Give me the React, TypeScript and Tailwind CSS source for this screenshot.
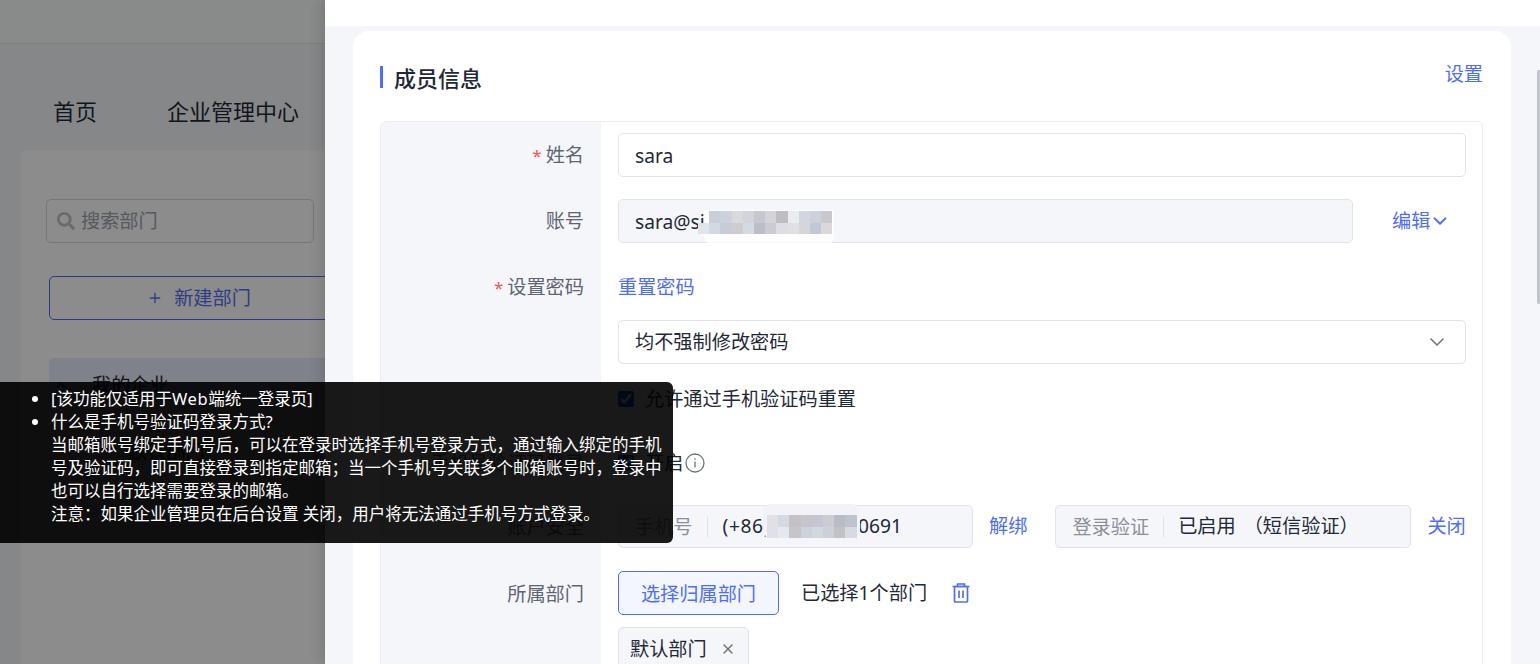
import type { ReactNode } from 'react';
import { ChevronDown, ChevronUp, Plus, X } from 'lucide-react';
import { FaSearch } from 'react-icons/fa';

const FONT = 'font-["Noto_Sans","Noto_Sans_CJK_SC",sans-serif]';

// 打码区域的马赛克色块
const EMAIL_MOSAIC = [
  ['bg-transparent', 'bg-[#c9ced9]', 'bg-[#cdd1dc]', 'bg-[#dadadd]', 'bg-[#d2d4da]', 'bg-[#c5c8d1]', 'bg-[#d3d3d8]', 'bg-[#bfbcc4]', 'bg-[#ebecef]', 'bg-[#d2d6df]', 'bg-[#cdd1db]', 'bg-[#c8c8ce]'],
  ['bg-[#e1e4ea]', 'bg-[#d3d8e2]', 'bg-[#c8ccd6]', 'bg-[#cdcdcf]', 'bg-[#d3dae1]', 'bg-[#bdbdc8]', 'bg-[#cbccd2]', 'bg-[#dddde3]', 'bg-[#e0e0e3]', 'bg-[#d5d5da]', 'bg-[#c2c7d6]', 'bg-[#dbd8da]'],
];

const PHONE_MOSAIC = [
  ['bg-[#e0e1e7]', 'bg-[#d5d9e2]', 'bg-[#c5c2c6]', 'bg-[#c6c5cb]', 'bg-[#c5c6d1]', 'bg-[#ccccd2]', 'bg-[#b9bcc5]', 'bg-[#bcc4ce]'],
  ['bg-[#e0e1e8]', 'bg-[#e4e8f0]', 'bg-[#c6c5c9]', 'bg-[#cdd1db]', 'bg-[#d3d7e0]', 'bg-[#ced0d9]', 'bg-[#c2c1c6]', 'bg-[#d7dae0]'],
];

function Mosaic({ rows, className }: { rows: string[][]; className: string }) {
  return (
    <div className={`absolute flex flex-col ${className}`}>
      {rows.map((row, i) => (
        <div key={i} className="flex">
          {row.map((color, j) => (
            <div key={j} className={`w-[11.2px] h-[11.5px] ${color}`} />
          ))}
        </div>
      ))}
    </div>
  );
}

function Row({
  label,
  required,
  children,
}: {
  label: string;
  required?: boolean;
  children: ReactNode;
}) {
  return (
    <div className="flex">
      <div className="w-[220px] shrink-0 bg-[#f5f6fa] pt-[11px] pr-[17px] text-right text-[#5e6472] leading-[44px]">
        {required && <span className="text-[#f5574c] text-[17px] mr-[4px]">*</span>}
        {label}
      </div>
      <div className="flex-1 min-w-0 py-[11px] pl-[17px] pr-[16px]">{children}</div>
    </div>
  );
}

function DimmedPage() {
  return (
    <div className="w-[325px] shrink-0 h-full bg-[#f5f6fa] overflow-hidden">
      <div className="h-[44px] border-b border-[#e6e6e6] bg-[#fafbfc]" />
      <div className="flex h-[106px] items-center pl-[53px] pt-[28px] gap-[70px] text-[22px] text-[#1f2937] whitespace-nowrap">
        <span>首页</span>
        <span>企业管理中心</span>
      </div>
      <div className="ml-[21px] h-[514px] bg-white rounded-t-[6px] pt-[49px] pl-[25px]">
        <div className="flex items-center w-[268px] h-[44px] border border-[#d9d9d9] rounded-[5px] pl-[10px] gap-[6px] text-[#9ca3af]">
          <FaSearch size={18} className="text-[#c4c4c4]" />
          搜索部门
        </div>
        <div className="flex items-center justify-center gap-[11px] w-[340px] ml-[3px] mt-[33px] h-[44px] border border-[#4c6cf7] rounded-[5px] text-[#5470f5] pr-[40px]">
          <Plus size={16} />
          新建部门
        </div>
        <div className="flex items-center w-[340px] ml-[3px] mt-[38px] h-[44px] bg-[#e8edfb] rounded-t-[5px] pl-[5px] pt-[10px] text-[#1f2937]">
          <ChevronUp size={14} />
          <span className="ml-[24px]">我的企业</span>
        </div>
        <div className="ml-[82px] mt-[36px] text-[#1f2937]">默认部门</div>
      </div>
    </div>
  );
}

function DrawerContent() {
  return (
    <div className="flex-1 min-w-0 h-full bg-white flex flex-col shadow-[-4px_0_12px_rgba(0,0,0,0.12)] relative z-10">
      <div className="h-[26px] shrink-0 bg-white" />
      <div className="flex-1 min-h-0 bg-[#f5f6fa] pt-[5px] pl-[28px] pr-[29px] overflow-hidden relative">
        <div className="absolute right-0 top-[44px] w-[3px] h-[234px] bg-[#c1c4cb] rounded-l-[2px]" />
        <div className="bg-white rounded-t-[16px] h-[700px] pt-[35px] px-[27px] pr-[28px]">
          <div className="flex justify-between h-[55px]">
            <div className="flex items-start">
              <div className="w-[3px] h-[22px] bg-[#4f6ef7]" />
              <span className="ml-[11px] text-[22px] font-medium text-[#1f2937] leading-[24px]">成员信息</span>
            </div>
            <span className="text-[#4f6ef7] leading-[16px]">设置</span>
          </div>

          <div className="border border-[#eceef2] rounded-t-[6px] h-[600px] bg-white overflow-hidden text-[#1f2937]">
            <Row label="姓名" required>
              <div className="h-[44px] border border-[#e1e3ea] rounded-[5px] px-[16px] leading-[44px]">sara</div>
            </Row>

            <Row label="账号">
              <div className="flex">
                <div className="relative w-[735px] h-[44px] border border-[#e1e3ea] rounded-[5px] bg-[#f5f6fa] px-[16px] leading-[44px]">
                  sara@si
                  <div className="absolute left-[85px] top-[10px] w-[130px] h-[36px] rounded-b-[10px] bg-white/80" />
                  <Mosaic rows={EMAIL_MOSAIC} className="left-[79px] top-[11px]" />
                </div>
                <div className="flex items-center ml-[39px] text-[#4f6ef7]">
                  编辑
                  <ChevronDown size={22} strokeWidth={2} className="-ml-[1px]" />
                </div>
              </div>
            </Row>

            <Row label="设置密码" required>
              <div className="h-[44px] leading-[44px] text-[#4f6ef7]">重置密码</div>
              <div className="flex items-center justify-between mt-[11px] h-[44px] border border-[#e1e3ea] rounded-[5px] px-[16px] pr-[16px]">
                均不强制修改密码
                <ChevronDown size={24} strokeWidth={1.5} className="text-[#6b7280]" />
              </div>
              <label className="flex items-center mt-[13px] h-[44px] -mb-[2px]">
                <input type="checkbox" defaultChecked className="w-[16px] h-[16px] accent-[#1a56db]" />
                <span className="ml-[11px]">允许通过手机验证码重置</span>
              </label>
            </Row>

            <Row label="手机号验证码登录">
              <label className="flex items-center h-[44px] -mb-[2px]">
                <input type="checkbox" defaultChecked className="w-[16px] h-[16px] accent-[#1a56db]" />
                <span className="ml-[11px]">开启</span>
                <svg className="ml-[2px] text-[#6b7280]" width="20" height="20" viewBox="0 0 20 20" fill="none" stroke="currentColor" strokeWidth="1.3">
                  <circle cx="10" cy="10" r="9" />
                  <path d="M10 8.6v6M10 5.2v1.6" />
                </svg>
              </label>
            </Row>

            <Row label="账户安全">
              <div className="flex items-center mb-[2px]">
                <div className="relative flex items-center w-[355px] h-[43px] border border-[#e1e3ea] rounded-[5px] bg-[#f5f6fa] pl-[16px]">
                  <span className="text-[#8a8f99] pr-[14px] border-r border-[#e1e3ea] leading-[22px]">手机号</span>
                  <span className="ml-[15px] tracking-[0.6px]">(+86)</span>
                  <span className="ml-[88px]">0691</span>
                  <div className="absolute left-[144px] -top-[2px] w-[97px] h-[34px] rounded-[8px] bg-[#f2f3f7]" />
                  <Mosaic rows={PHONE_MOSAIC} className="left-[148px] top-[9px]" />
                </div>
                <span className="ml-[16px] text-[#4f6ef7]">解绑</span>
                <div className="flex items-center w-[356px] h-[43px] ml-[28px] border border-[#e1e3ea] rounded-[5px] bg-[#f5f6fa] pl-[16px]">
                  <span className="text-[#8a8f99] pr-[14px] border-r border-[#e1e3ea] leading-[22px]">登录验证</span>
                  <span className="ml-[14px]">已启用</span>
                  <span className="ml-[8px]">（短信验证）</span>
                </div>
                <span className="ml-[16px] text-[#4f6ef7]">关闭</span>
              </div>
            </Row>

            <Row label="所属部门">
              <div className="flex items-center -mt-[1px]">
                <div className="w-[161px] h-[44px] border border-[#4f6ef7] rounded-[5px] bg-[#f3f5ff] text-[#4f6ef7] text-center leading-[44px]">
                  选择归属部门
                </div>
                <span className="ml-[22px]">已选择1个部门</span>
                <svg className="ml-[25px] text-[#4f6ef7]" width="18" height="20" viewBox="0 0 18 20" fill="none" stroke="currentColor" strokeWidth="1.7">
                  <path d="M0.5 3.5h17M5.5 3.5V1h7v2.5" />
                  <rect x="2.5" y="3.5" width="13" height="15.5" rx="1" />
                  <path d="M7 7.5v7.5M11 7.5v7.5" />
                </svg>
              </div>
              <div className="flex items-center w-[131px] h-[44px] mt-[12px] border border-[#e1e3ea] rounded-[5px] bg-[#f5f6fa] pl-[11px]">
                默认部门
                <X size={16} className="ml-[13px] text-[#6b7280]" />
              </div>
            </Row>
          </div>
        </div>
      </div>
    </div>
  );
}

export default function App() {
  return (
    <div className={`relative flex w-[1540px] h-[664px] overflow-hidden bg-white text-[19.2px] ${FONT}`}>
      <DimmedPage />
      <div className="absolute left-0 top-0 w-[325px] h-full bg-black/45" />
      <DrawerContent />

      {/* 悬浮提示 */}
      <div className="absolute z-20 left-0 top-[382px] w-[673px] h-[161px] bg-black/90 rounded-r-[6px] text-white text-[16.5px] leading-[23px] pt-[5px] pl-[51px] pr-[8px]">
        <ul className="list-disc">
          <li>[该功能仅适用于<span className="tracking-[0.6px]">Web</span>端统一登录页]</li>
          <li>
            什么是手机号验证码登录方式?
            <br />
            当邮箱账号绑定手机号后，可以在登录时选择手机号登录方式，通过输入绑定的手机号及验证码，即可直接登录到指定邮箱；当一个手机号关联多个邮箱账号时，登录中也可以自行选择需要登录的邮箱。
            <br />
            注意：如果企业管理员在后台设置 关闭，用户将无法通过手机号方式登录。
          </li>
        </ul>
      </div>
    </div>
  );
}
